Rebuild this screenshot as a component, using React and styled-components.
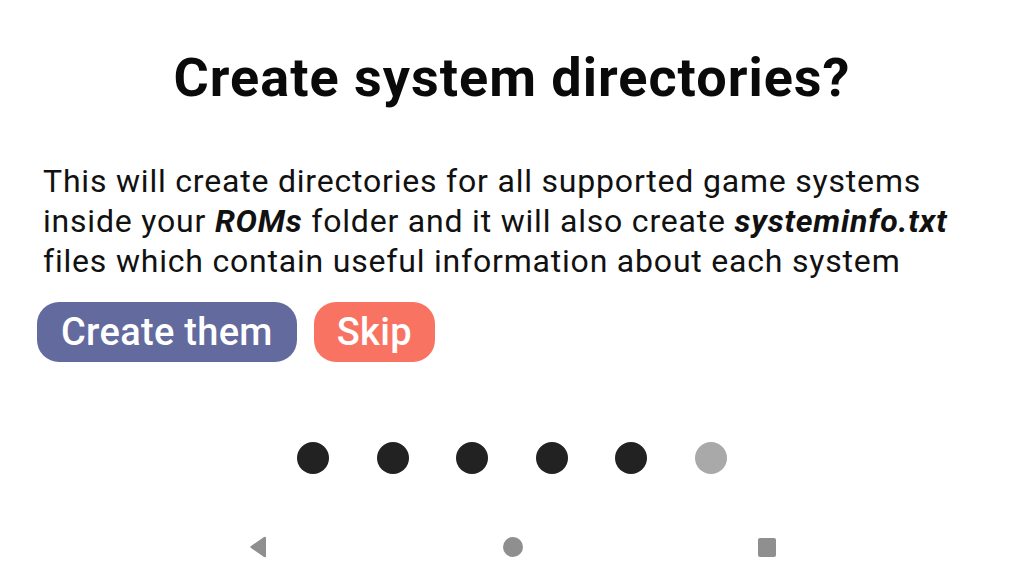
import React from "react";
import styled, { createGlobalStyle } from "styled-components";

const GlobalStyle = createGlobalStyle`
  html, body {
    margin: 0;
    padding: 0;
    background: #ffffff;
    font-family: Roboto, "Liberation Sans", sans-serif;
  }
`;

const Screen = styled.div`
  width: 1024px;
  height: 576px;
  display: flex;
  flex-direction: column;
  background: #ffffff;
  overflow: hidden;
`;

const Title = styled.h1`
  margin: 47px 0 0;
  font-size: 54px;
  line-height: 62px;
  font-weight: 700;
  letter-spacing: 1px;
  color: #0a0a0a;
  text-align: center;
`;

const Body = styled.p`
  margin: 52px 0 0 43px;
  font-size: 32px;
  line-height: 40px;
  letter-spacing: 0.8px;
  color: #111111;
  white-space: nowrap;

  b {
    font-style: italic;
    font-weight: 700;
  }
`;

const Actions = styled.div`
  display: flex;
  gap: 17px;
  margin: 21px 0 0 37px;
`;

const Button = styled.button`
  height: 60px;
  padding: 0 ${(p) => p.$pad}px;
  border: none;
  border-radius: 22px;
  background: ${(p) => p.$bg};
  color: #ffffff;
  font-family: Roboto, "Liberation Sans", sans-serif;
  font-size: 38px;
  font-weight: 500;
  letter-spacing: 0.3px;
`;

const Dots = styled.div`
  display: flex;
  justify-content: center;
  gap: 47.5px;
  margin-top: 80px;
`;

const Dot = styled.span`
  width: 32px;
  height: 32px;
  border-radius: 50%;
  background: ${(p) => (p.$active ? "#222222" : "#a9a9a9")};
`;

const NavBar = styled.div`
  display: flex;
  justify-content: center;
  align-items: center;
  gap: 235px;
  margin-top: 57px;
  height: 32px;
`;

const NavCircle = styled.span`
  width: 20px;
  height: 20px;
  border-radius: 50%;
  background: #8f8f8f;
`;

const NavSquare = styled.span`
  width: 18px;
  height: 19px;
  border-radius: 2px;
  background: #8f8f8f;
`;

export default function App() {
  return (
    <>
      <GlobalStyle />
      <Screen>
        <Title>Create system directories?</Title>
        <Body>
          This will create directories for all supported game systems
          <br />
          inside your <b>ROMs</b> folder and it will also create{" "}
          <b>systeminfo.txt</b>
          <br />
          files which contain useful information about each system
        </Body>
        <Actions>
          <Button $bg="#626a9e" $pad={24}>Create them</Button>
          <Button $bg="#f97362" $pad={23}>Skip</Button>
        </Actions>
        <Dots>
          {[1, 1, 1, 1, 1, 0].map((a, i) => (
            <Dot key={i} $active={a} />
          ))}
        </Dots>
        <NavBar>
          <svg width="20" height="22" viewBox="0 0 20 22">
            <path d="M18 2 L18 20 Q18 22 16 21 L3 12 Q1.5 11 3 10 L16 1 Q18 0 18 2 Z" fill="#8f8f8f" />
          </svg>
          <NavCircle />
          <NavSquare />
        </NavBar>
      </Screen>
    </>
  );
}
